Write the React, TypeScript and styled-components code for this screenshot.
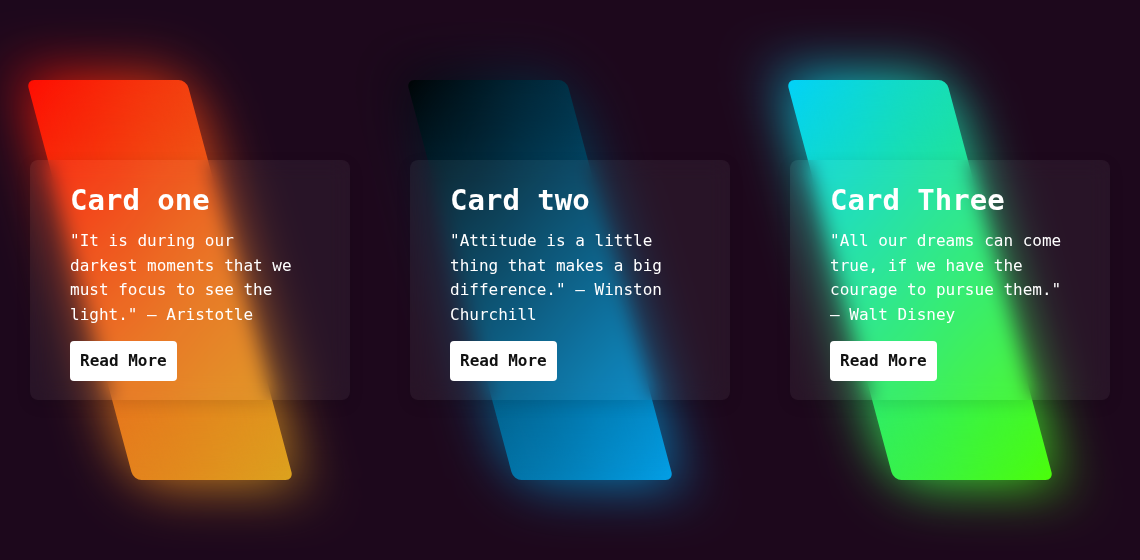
import styled, { createGlobalStyle } from 'styled-components';

const GlobalStyle = createGlobalStyle`
    * {
        box-sizing: border-box;
    }
    html, body {
        margin: 0;
        padding: 0;
        background: #1d081c;
    }
    body {
        font-family: "DejaVu Sans Mono", "Liberation Mono", monospace;
    }
`;

const Page = styled.main`
    width: 100%;
    height: 560px;
    display: flex;
    justify-content: center;
    align-items: center;
    gap: 60px;
    background: #1d081c;
    overflow: hidden;
`;

const Box = styled.div<{ $gradient: string }>`
    position: relative;
    width: 320px;
    height: 400px;
    display: flex;
    align-items: center;

    &::before,
    &::after {
        content: '';
        position: absolute;
        top: 0;
        left: 50px;
        width: 50%;
        height: 100%;
        border-radius: 8px;
        background: ${({ $gradient }) => $gradient};
        transform: skewX(15deg);
    }

    &::after {
        filter: blur(30px);
    }
`;

const Content = styled.div`
    position: relative;
    z-index: 1;
    width: 100%;
    padding: 22px 40px 19px;
    background: rgba(255, 255, 255, 0.05);
    backdrop-filter: blur(10px);
    box-shadow: 0 5px 15px rgba(0, 0, 0, 0.1);
    border-radius: 8px;
    color: #fff;
`;

const Title = styled.h2`
    margin: 0 0 11px;
    font-size: 29px;
    line-height: 36px;
    font-weight: 700;
    color: #fff;
`;

const Quote = styled.p`
    margin: 0 0 9px;
    font-size: 16px;
    line-height: 24.5px;
`;

const ReadMore = styled.a`
    display: inline-block;
    margin-top: 5px;
    padding: 10px;
    border-radius: 4px;
    background: #fff;
    color: #111;
    font-size: 16px;
    line-height: 20px;
    font-weight: 700;
    text-decoration: none;
`;

const cards = [
    {
        title: 'Card one',
        quote: '"It is during our darkest moments that we must focus to see the light." — Aristotle',
        gradient: 'linear-gradient(315deg, #dba51e, #e8701c 45%, #ff0800)',
    },
    {
        title: 'Card two',
        quote: '"Attitude is a little thing that makes a big difference." — Winston Churchill',
        gradient: 'linear-gradient(315deg, #03a3ec, #000000)',
    },
    {
        title: 'Card Three',
        quote: '"All our dreams can come true, if we have the courage to pursue them." — Walt Disney',
        gradient: 'linear-gradient(315deg, #4dff03, #00d0ff)',
    },
];

export default function App() {
    return (
        <>
            <GlobalStyle />
            <Page>
                {cards.map((card) => (
                    <Box key={card.title} $gradient={card.gradient}>
                        <Content>
                            <Title>{card.title}</Title>
                            <Quote>{card.quote}</Quote>
                            <ReadMore href="#">Read More</ReadMore>
                        </Content>
                    </Box>
                ))}
            </Page>
        </>
    );
}
